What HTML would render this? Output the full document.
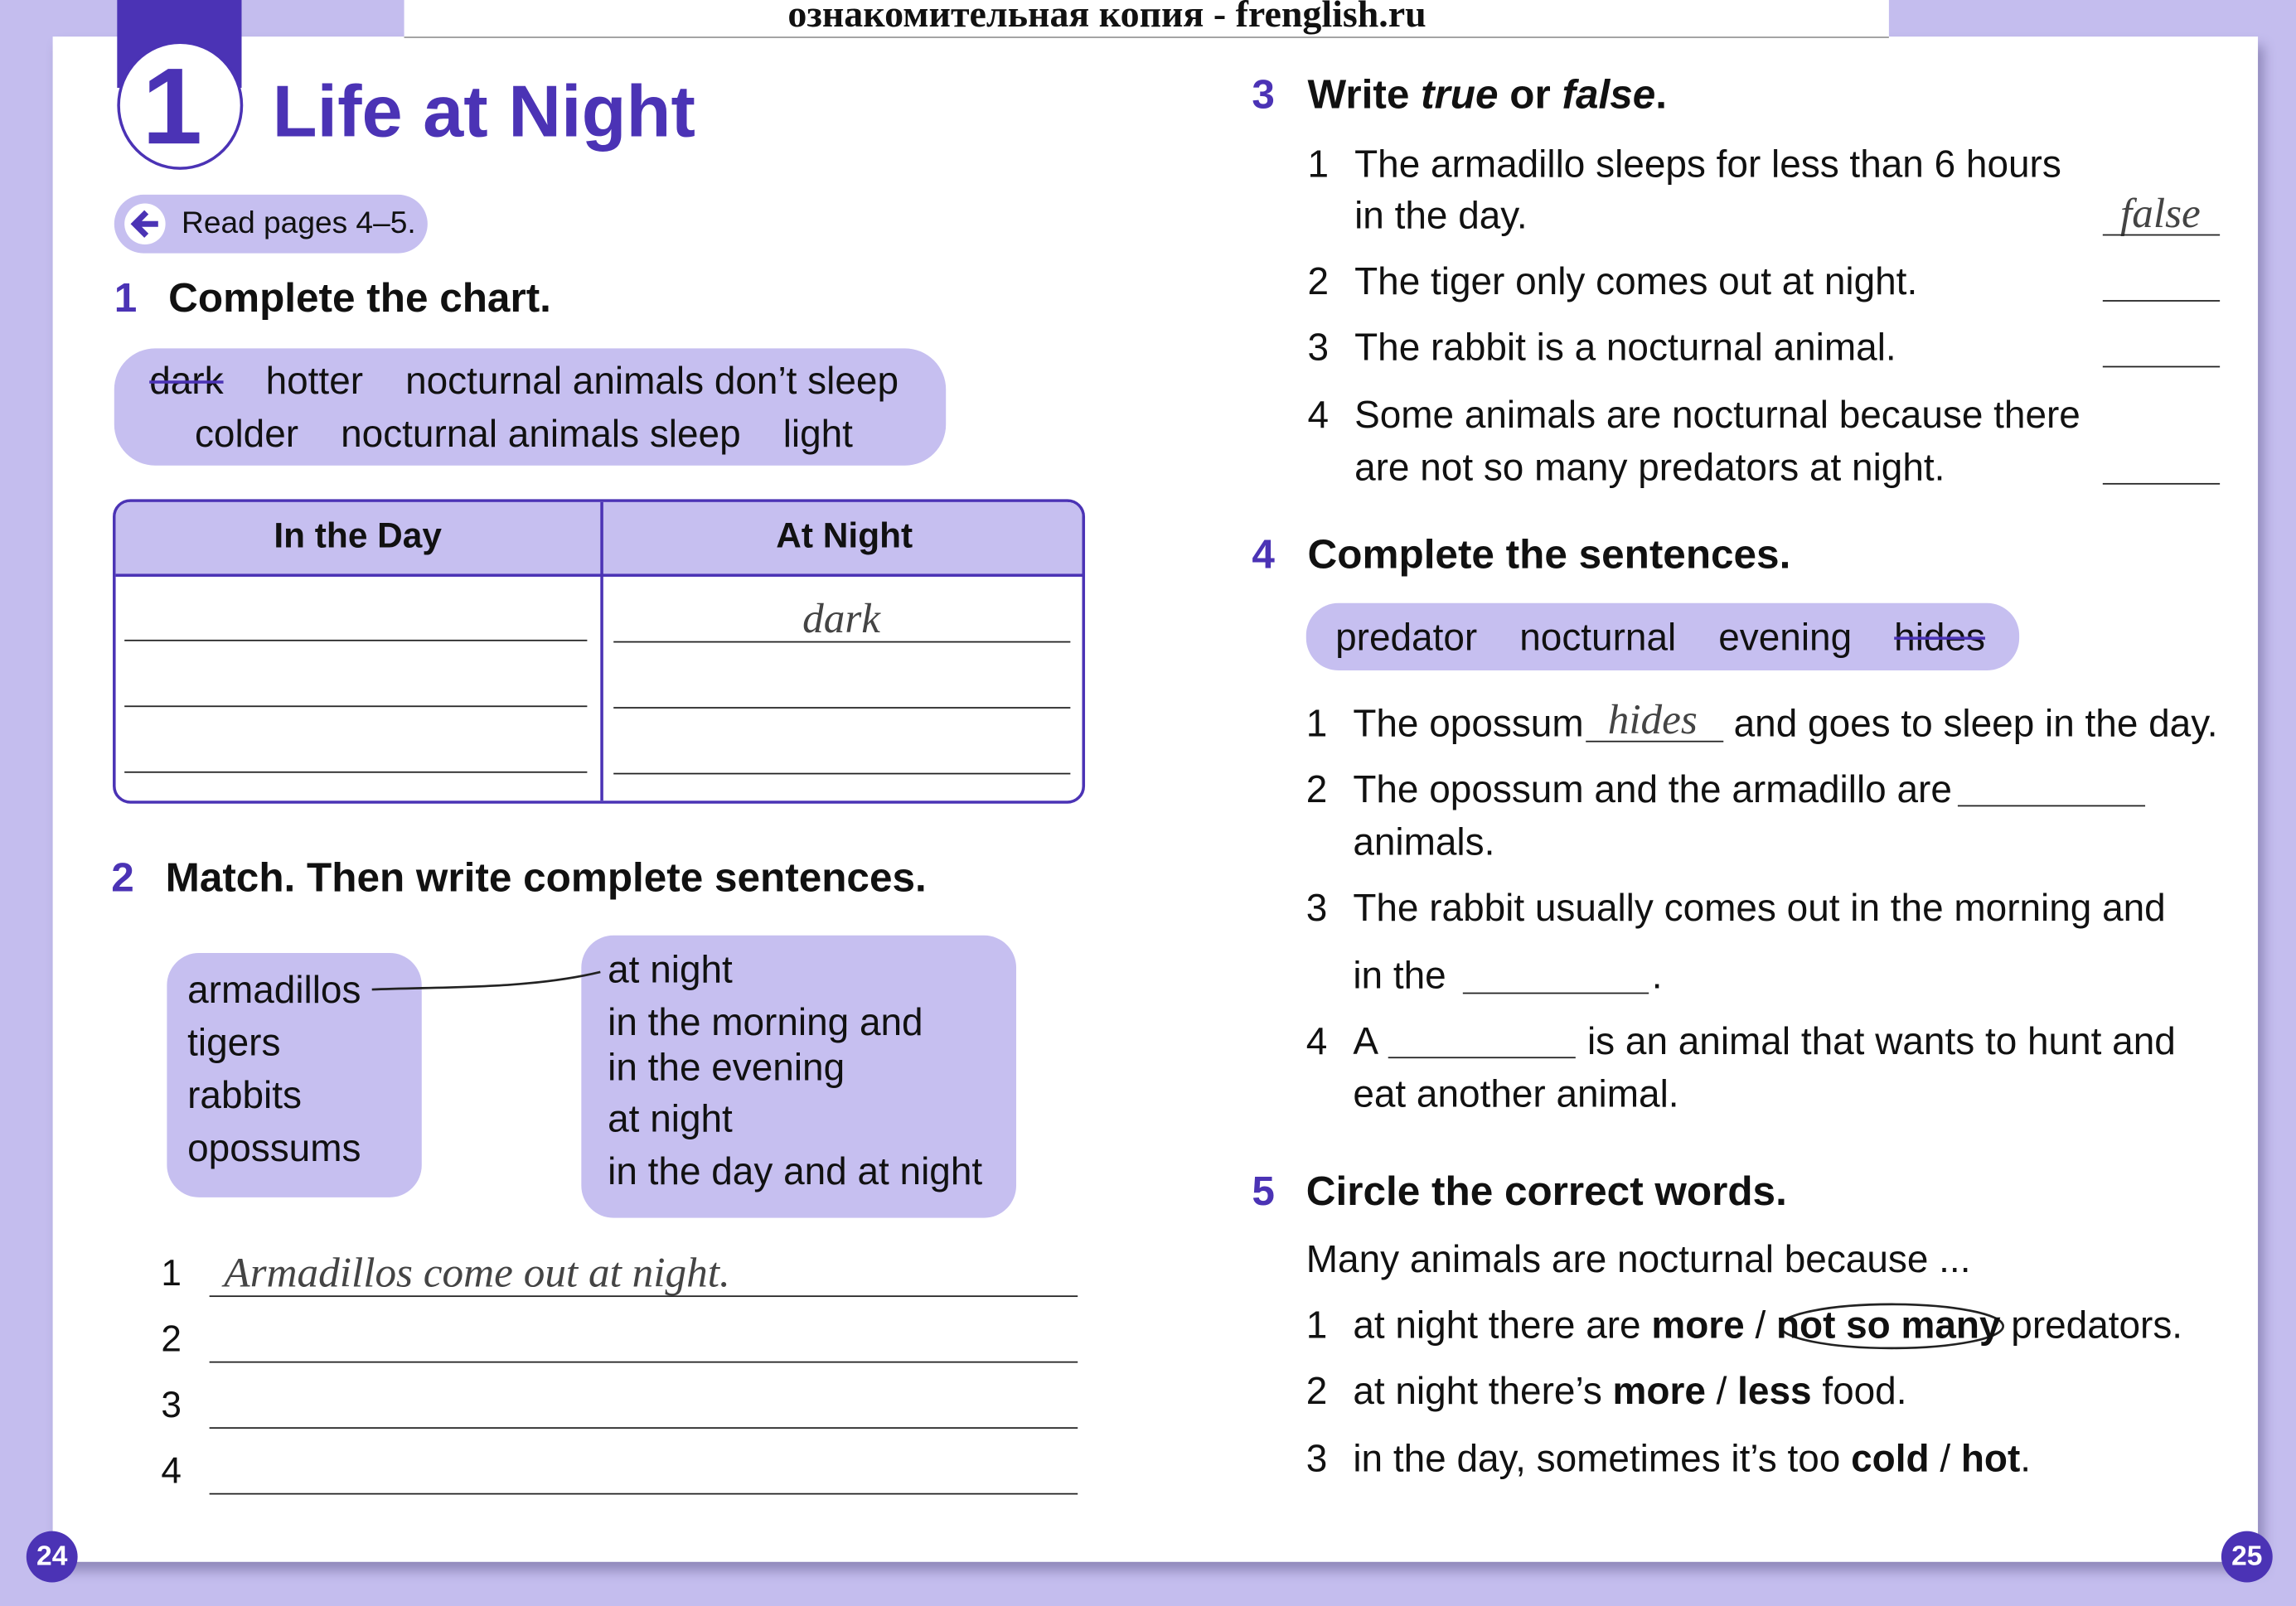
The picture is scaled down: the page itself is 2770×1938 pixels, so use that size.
<!DOCTYPE html>
<html><head><meta charset="utf-8"><style>
html,body{margin:0;padding:0;background:#c4bdee;overflow:hidden}
#w{position:absolute;left:0;top:0;width:1568px;height:1096px;transform:scale(1.76658,1.76642);transform-origin:0 0;font-family:"Liberation Sans",sans-serif;color:#111;}
.a{position:absolute;white-space:nowrap;line-height:1;}
.t{font-size:26px}
.h{font-size:28px;font-weight:bold}
.n{color:#4b33b5}
.box{position:absolute;background:#c6bff0;border-radius:22px}
.ln{position:absolute;height:1.3px;background:#222}
.hw{font-family:"Liberation Serif",serif;font-style:italic;color:#444;font-size:29px}
#c{position:absolute;left:0;top:1px;width:1568px;height:1096px}
</style></head><body><div id="w">
<div style="position:absolute;left:36px;top:25px;width:1506px;height:1042px;background:#fff;box-shadow:4px 6px 8px #8d86b8"></div>
<div style="position:absolute;left:276px;top:0;width:1014px;height:25px;background:#fff;border-bottom:1px solid #999"></div>
<div class="a" style="left:538px;top:-3px;font-family:'Liberation Serif',serif;font-weight:bold;font-size:26px">ознакомительная копия - frenglish.ru</div>
<div style="position:absolute;left:80px;top:0;width:85px;height:60px;background:#4b33b5"></div>
<div style="position:absolute;left:80px;top:28px;width:82px;height:84px;border-radius:50%;background:#fff;border:2px solid #4b33b5"></div>
<div class="a" style="left:97px;top:36px;font-size:74px;font-weight:bold;color:#4b33b5">1</div>
<div class="a" style="left:186px;top:51px;font-size:50px;font-weight:bold;color:#4b33b5">Life at Night</div>
<div class="box" style="left:78px;top:133px;width:214px;height:40px;border-radius:20px"></div>
<div style="position:absolute;left:85px;top:139px;width:28px;height:28px;border-radius:50%;background:#fff"></div>
<svg style="position:absolute;left:88px;top:142px" width="24" height="22"><path d="M20 11H5M12 3L4 11L12 19" stroke="#4b33b5" stroke-width="4" fill="none"/></svg>
<div class="a" style="left:124px;top:142px;font-size:21px">Read pages 4–5.</div>
<div id="c">
<div class="a h n" style="left:78px;top:189px">1</div><div class="a h" style="left:115px;top:189px">Complete the chart.</div>
<div class="box" style="left:78px;top:237px;width:568px;height:80px;border-radius:28px"></div>
<div class="a t" style="left:102px;top:246px"><s style="text-decoration-color:#4b33b5">dark</s>&nbsp;&nbsp;&nbsp; hotter &nbsp;&nbsp; nocturnal animals don’t sleep</div>
<div class="a t" style="left:133px;top:282px">colder &nbsp;&nbsp; nocturnal animals sleep &nbsp;&nbsp; light</div>
<div style="position:absolute;left:77px;top:340px;width:660px;height:204px;border:2px solid #4b33b5;border-radius:12px;overflow:hidden">
<div style="height:49px;background:#c6bff0;border-bottom:2px solid #4b33b5"></div>
<div style="position:absolute;left:331px;top:0;width:2px;height:204px;background:#4b33b5"></div></div>
<div class="a" style="left:187px;top:354px;font-weight:bold;font-size:24px">In the Day</div>
<div class="a" style="left:530px;top:354px;font-weight:bold;font-size:24px">At Night</div>
<div class="ln" style="left:85px;top:436px;width:316px"></div><div class="ln" style="left:85px;top:481px;width:316px"></div><div class="ln" style="left:85px;top:526px;width:316px"></div>
<div class="ln" style="left:419px;top:437px;width:312px"></div><div class="ln" style="left:419px;top:482px;width:312px"></div><div class="ln" style="left:419px;top:527px;width:312px"></div>
<div class="a hw" style="left:548px;top:408px">dark</div>
<div class="a h n" style="left:76px;top:585px">2</div><div class="a h" style="left:113px;top:585px">Match. Then write complete sentences.</div>
<div class="box" style="left:114px;top:650px;width:174px;height:167px"></div>
<div class="box" style="left:397px;top:638px;width:297px;height:193px"></div>
<div class="a t" style="left:128px;top:662px">armadillos</div>
<div class="a t" style="left:128px;top:698px">tigers</div>
<div class="a t" style="left:128px;top:734px">rabbits</div>
<div class="a t" style="left:128px;top:770px">opossums</div>
<div class="a t" style="left:415px;top:648px">at night</div>
<div class="a t" style="left:415px;top:684px">in the morning and</div>
<div class="a t" style="left:415px;top:715px">in the evening</div>
<div class="a t" style="left:415px;top:750px">at night</div>
<div class="a t" style="left:415px;top:786px">in the day and at night</div>
<svg style="position:absolute;left:0;top:0" width="1568" height="1096"><path d="M254 675 C300 673 360 675 410 663" stroke="#222" stroke-width="1.5" fill="none"/>
<ellipse cx="1292" cy="905" rx="76" ry="15" stroke="#222" stroke-width="1.5" fill="none"/></svg>
<div class="a" style="left:110px;top:857px;font-size:25px">1</div>
<div class="a" style="left:110px;top:902px;font-size:25px">2</div>
<div class="a" style="left:110px;top:947px;font-size:25px">3</div>
<div class="a" style="left:110px;top:992px;font-size:25px">4</div>
<div class="ln" style="left:143px;top:884px;width:593px"></div><div class="ln" style="left:143px;top:929px;width:593px"></div><div class="ln" style="left:143px;top:974px;width:593px"></div><div class="ln" style="left:143px;top:1019px;width:593px"></div>
<div class="a hw" style="left:153px;top:855px">Armadillos come out at night.</div>

<div class="a h n" style="left:855px;top:50px">3</div><div class="a h" style="left:893px;top:50px">Write <i>true</i> or <i>false</i>.</div>
<div class="a t" style="left:893px;top:98px">1</div><div class="a t" style="left:925px;top:98px">The armadillo sleeps for less than 6 hours</div>
<div class="a t" style="left:925px;top:133px">in the day.</div>
<div class="a t" style="left:893px;top:178px">2</div><div class="a t" style="left:925px;top:178px">The tiger only comes out at night.</div>
<div class="a t" style="left:893px;top:223px">3</div><div class="a t" style="left:925px;top:223px">The rabbit is a nocturnal animal.</div>
<div class="a t" style="left:893px;top:269px">4</div><div class="a t" style="left:925px;top:269px">Some animals are nocturnal because there</div>
<div class="a t" style="left:925px;top:305px">are not so many predators at night.</div>
<div class="a hw" style="left:1448px;top:131px">false</div>
<div class="ln" style="left:1436px;top:159px;width:80px"></div><div class="ln" style="left:1436px;top:204px;width:80px"></div><div class="ln" style="left:1436px;top:249px;width:80px"></div><div class="ln" style="left:1436px;top:329px;width:80px"></div>

<div class="a h n" style="left:855px;top:364px">4</div><div class="a h" style="left:893px;top:364px">Complete the sentences.</div>
<div class="box" style="left:892px;top:411px;width:487px;height:46px"></div>
<div class="a t" style="left:912px;top:421px">predator &nbsp;&nbsp; nocturnal &nbsp;&nbsp; evening &nbsp;&nbsp; <s style="text-decoration-color:#4b33b5">hides</s></div>
<div class="a t" style="left:892px;top:480px">1</div><div class="a t" style="left:924px;top:480px">The opossum</div>
<div class="a t" style="left:1184px;top:480px">and goes to sleep in the day.</div>
<div class="a hw" style="left:1098px;top:477px">hides</div>
<div class="ln" style="left:1083px;top:505px;width:94px"></div>
<div class="a t" style="left:892px;top:525px">2</div><div class="a t" style="left:924px;top:525px">The opossum and the armadillo are</div>
<div class="a t" style="left:924px;top:561px">animals.</div>
<div class="ln" style="left:1337px;top:549px;width:128px"></div>
<div class="a t" style="left:892px;top:606px">3</div><div class="a t" style="left:924px;top:606px">The rabbit usually comes out in the morning and</div>
<div class="a t" style="left:924px;top:652px">in the</div><div class="a t" style="left:1128px;top:652px">.</div>
<div class="ln" style="left:999px;top:677px;width:127px"></div>
<div class="a t" style="left:892px;top:697px">4</div><div class="a t" style="left:924px;top:697px">A</div>
<div class="a t" style="left:1084px;top:697px">is an animal that wants to hunt and</div>
<div class="a t" style="left:924px;top:733px">eat another animal.</div>
<div class="ln" style="left:948px;top:721px;width:128px"></div>

<div class="a h n" style="left:855px;top:799px">5</div><div class="a h" style="left:892px;top:799px">Circle the correct words.</div>
<div class="a t" style="left:892px;top:846px">Many animals are nocturnal because ...</div>
<div class="a t" style="left:892px;top:891px">1</div><div class="a t" style="left:924px;top:891px">at night there are <b>more</b> / <b>not so many</b> predators.</div>
<div class="a t" style="left:892px;top:936px">2</div><div class="a t" style="left:924px;top:936px">at night there’s <b>more</b> / <b>less</b> food.</div>
<div class="a t" style="left:892px;top:982px">3</div><div class="a t" style="left:924px;top:982px">in the day, sometimes it’s too <b>cold</b> / <b>hot</b>.</div>
</div>
<div style="position:absolute;left:18px;top:1046px;width:35px;height:35px;border-radius:50%;background:#4b33b5;color:#fff;font-weight:bold;font-size:19px;text-align:center;line-height:35px">24</div>
<div style="position:absolute;left:1517px;top:1046px;width:35px;height:35px;border-radius:50%;background:#4b33b5;color:#fff;font-weight:bold;font-size:19px;text-align:center;line-height:35px">25</div>
</div></body></html>
